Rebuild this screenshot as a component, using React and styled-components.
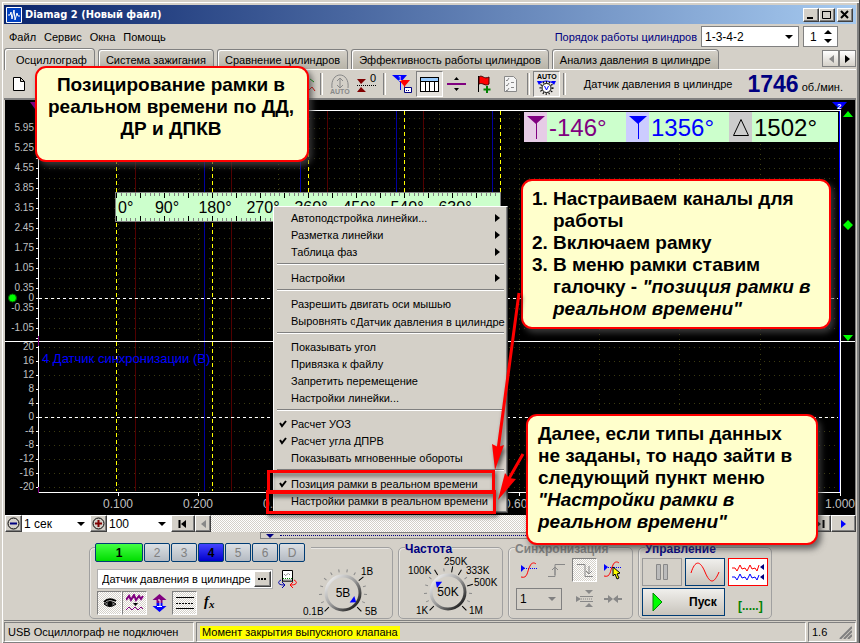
import { Fragment } from 'react'
import styled, { createGlobalStyle, css } from 'styled-components'

const sans = '"Liberation Sans", sans-serif'

const GlobalStyle = createGlobalStyle`
*{ box-sizing:border-box; }
body{
margin:0;
background:#d4d0c8;
color:#000;
font-family:${sans};
font-size:11px;
}
button, input, select{
font:inherit;
color:inherit;
margin:0;
padding:0;
}
`

const hatch = 'repeating-conic-gradient(#fff 0 25%, #d4d0c8 0 50%) 0 0 / 2px 2px'

const raised = css`
border:1px solid;
border-color:#fff #404040 #404040 #fff;
box-shadow:inset -1px -1px 0 #808080;
background:#d4d0c8;
`

const Page = styled.div`
position:relative;
`
const Window = styled.main`
display:flex;
flex-direction:column;
padding:5px 3px 1px 4px;
background:#d4d0c8;
border-right:1px solid #404040;
box-shadow:inset 2px 2px 0 #d4d0c8, inset 3px 3px 0 #fff, inset -2px -1px 0 #808080;
`
const TitleBar = styled.header`
display:flex;
align-items:center;
gap:3px;
height:19px;
padding:0 3px 0 2px;
background:linear-gradient(90deg, #0a246a, #a6caf0);
`
const Title = styled.h1`
flex:1;
margin:0;
color:#fff;
font-family:"DejaVu Sans Condensed", "DejaVu Sans", sans-serif;
font-size:11px;
font-weight:bold;
`
const WindowButtons = styled.div`
display:flex;
`
const WindowButton = styled.button`
${raised}
display:flex;
width:16px;
height:14px;
margin-left:${p => p.$apart ? '2px' : '0'};
`
const MenuRow = styled.div`
display:flex;
align-items:center;
justify-content:space-between;
height:25px;
padding:0 18px 0 5px;
`
const MenuBar = styled.nav`
display:flex;
gap:8px;
button{
border:0;
background:none;
}
`
const Order = styled.div`
display:flex;
align-items:center;
gap:4px;
color:#000080;
`
const SelectBox = styled.span`
display:grid;
align-items:center;
width:${p => p.$width};
height:${p => p.$height};
border:${p => p.$flat ? '0' : '1px solid #808080'};
background:${p => p.$off ? 'transparent' : '#fff'};
color:#000;
font-size:12px;
> *{ grid-area:1 / 1; }
select{
appearance:none;
width:100%;
height:100%;
padding-left:${p => p.$flat ? '2px' : '3px'};
border:0;
background:none;
}
svg{
justify-self:end;
margin-right:5px;
pointer-events:none;
}
`
const Spinner = styled.label`
display:flex;
align-items:center;
width:35px;
height:21px;
padding-left:6px;
border:1px solid #808080;
background:#fff;
color:#000;
font-size:12px;
input{
width:14px;
border:0;
background:none;
}
`
const TabRow = styled.div`
display:flex;
align-items:flex-end;
justify-content:space-between;
height:21px;
border-bottom:1px solid #fff;
`
const Tabs = styled.div`
display:flex;
align-items:flex-end;
gap:3px;
`
const Tab = styled.button`
height:${p => p.$active ? '22px' : '20px'};
margin-bottom:${p => p.$active ? '-1px' : '0'};
padding:${p => p.$active ? '0 7px 0 11px' : '0 7px'};
border:1px solid #808080;
border-bottom:0;
border-radius:3px 4px 0 0;
box-shadow:inset 1px 1px 0 #fff;
background:${p => p.$active ? '#d4d0c8' : 'linear-gradient(#d4d0c8, #b8b4a8)'};
white-space:nowrap;
`
const TabScroll = styled.div`
display:flex;
margin-bottom:2px;
button{
display:flex;
align-items:center;
justify-content:center;
width:17px;
height:17px;
border:1px solid #808080;
background:linear-gradient(#fff, #d4d0c8);
}
`
const Toolbar = styled.div`
display:flex;
align-items:center;
height:30px;
padding:0 13px 0 1px;
border-bottom:2px solid #808080;
white-space:nowrap;
`
const ToolSpacer = styled.div`
width:275px;
`
const Tool = styled.button`
display:flex;
align-items:center;
justify-content:center;
width:27px;
height:26px;
border:1px solid transparent;
background:none;
${p => p.$pressed && css`
border-color:#808080 #fff #fff #808080;
background:#e4e1dc;
`}
`
const Divider = styled.span`
width:3px;
height:22px;
margin:0 3px;
border-left:1px solid #808080;
border-right:1px solid #fff;
`
const ToolLabel = styled.span`
margin-left:auto;
`
const Rpm = styled.strong`
margin:0 3px 0 15px;
color:#000080;
font-size:23px;
line-height:24px;
`
const RpmUnit = styled.span`
padding-top:6px;
`
const Scope = styled.section`
position:relative;
margin:0 0 0 1px;
border-right:1px solid #808080;
background:#000;
> svg{
display:block;
width:100%;
}
`
const Readouts = styled.div`
position:absolute;
top:12px;
right:17px;
display:flex;
height:30px;
background:#ccffcc;
font-size:24px;
line-height:31px;
`
const ReadoutIcon = styled.span`
display:flex;
align-items:center;
justify-content:center;
width:23px;
background:${p => p.$bg};
`
const ReadoutValue = styled.span`
width:${p => p.$width};
padding-left:2px;
color:${p => p.$color};
`
const Ruler = styled.div`
position:absolute;
top:92px;
left:110px;
width:386px;
height:30px;
border:1px solid #808080;
background:#ccffcc;
svg{ display:block; }
`
const ControlRow = styled.div`
display:flex;
height:17px;
margin-left:1px;
background:#d4d0c8;
`
const SmallButton = styled.button`
${raised}
display:flex;
align-items:center;
justify-content:center;
width:${p => p.$width};
`
const Track = styled.div`
flex:1;
background:${hatch};
`
const Splitter = styled.div`
display:flex;
align-items:center;
gap:6px;
align-self:center;
width:340px;
height:7px;
padding:0 5px;
border:1px solid #808080;
i{
flex:1;
border-top:1px dotted #000080;
}
`
const Panel = styled.section`
display:flex;
gap:5px;
height:82px;
padding:8px 4px 1px 85px;
border-bottom:1px solid #808080;
`
const Group = styled.div`
display:flex;
flex-direction:column;
width:${p => p.$width};
height:72px;
border:1px solid #a0a0a0;
border-radius:5px;
box-shadow:inset 1px 1px 0 #e8e6e2;
`
const GroupTitle = styled.h2`
align-self:flex-start;
margin:-6px 0 0 6px;
background:#d4d0c8;
color:${p => p.$off ? '#808080' : '#000080'};
font-size:12px;
font-weight:bold;
line-height:15px;
`
const Channels = styled.div`
display:flex;
align-self:flex-start;
gap:1px;
margin:-5px 0 0 5px;
padding-right:6px;
background:#d4d0c8;
`
const Channel = styled.button`
width:${p => p.$wide ? '48px' : '26px'};
height:19px;
border:1px solid #003c74;
border-radius:2px;
background:linear-gradient(${p => p.$fill || '#dce0e4, #b4bac2'});
color:${p => p.$fill ? '#000' : '#808080'};
font-size:12px;
font-weight:${p => p.$fill ? 'bold' : 'normal'};
`
const ChannelBody = styled.div`
display:flex;
align-items:flex-start;
justify-content:space-between;
padding:0 5px 0 7px;
`
const Signal = styled.div`
display:flex;
flex-direction:column;
gap:2px;
padding-top:7px;
`
const Row = styled.div`
display:flex;
align-items:center;
gap:${p => p.$gap || '0'};
`
const SignalField = styled.label`
display:flex;
width:176px;
height:20px;
padding:1px;
border:1px solid #b0b0b0;
background:#fff;
input{
flex:1;
min-width:0;
padding-left:3px;
border:0;
background:none;
}
`
const Toggle = styled.button`
display:flex;
align-items:center;
justify-content:center;
width:25px;
height:24px;
border:1px solid transparent;
background:none;
${p => p.$pressed && css`
border-color:#808080 #fff #fff #808080;
background:${hatch};
`}
`
const KnobBox = styled.label`
display:grid;
margin-top:${p => p.$raise ? '-4px' : '0'};
> *{ grid-area:1 / 1; }
input{
opacity:0;
width:34px;
place-self:center;
}
`
const SyncGrid = styled.div`
display:grid;
grid-template-columns:repeat(4, 24px);
justify-content:space-between;
align-items:center;
gap:5px 4px;
padding:1px 8px 0 7px;
`
const Wide = styled.span`
grid-column:span 2;
`
const RunGrid = styled.div`
display:grid;
grid-template-columns:40px 40px 40px;
grid-template-rows:28px 28px;
gap:2px 3px;
padding:1px 3px;
`
const RunButton = styled.button`
display:flex;
align-items:center;
justify-content:${p => p.$span ? 'flex-start' : 'center'};
gap:26px;
padding-left:${p => p.$span ? '9px' : '0'};
grid-column:span ${p => p.$span || 1};
border:1px solid ${p => p.$edge || '#003c74'};
background:${p => p.$fill || 'linear-gradient(#f0efec, #c8c4bc)'};
font-size:12px;
font-weight:bold;
`
const Brackets = styled.output`
align-self:center;
padding:7px 0 0 10px;
color:#008000;
font-size:12px;
font-weight:bold;
white-space:nowrap;
`
const StatusBar = styled.footer`
display:flex;
gap:2px;
height:20px;
margin-top:1px;
`
const Status = styled.div`
display:flex;
align-items:center;
flex:${p => p.$flex || '0 0 auto'};
width:${p => p.$width || 'auto'};
padding:0 3px;
border:1px solid;
border-color:#808080 #fff #fff #808080;
mark{
padding:0 2px;
background:#ff0;
line-height:13px;
}
svg{ margin-left:auto; }
`
const Popup = styled.div`
position:absolute;
top:206px;
left:273px;
width:235px;
padding:2px 2px 3px;
${raised}
`
const PopupItem = styled.button`
display:grid;
grid-template-columns:15px 1fr 10px;
align-items:center;
width:100%;
height:17px;
border:0;
background:none;
text-align:left;
white-space:nowrap;
`
const PopupLine = styled.hr`
height:2px;
margin:3px 1px 4px;
border:0;
border-top:1px solid #808080;
border-bottom:1px solid #fff;
`
const Hint = styled.div`
position:absolute;
top:315px;
left:355px;
padding:0 1px;
background:#d4d0c8;
line-height:15px;
white-space:nowrap;
`
const Callout = styled.aside`
position:absolute;
top:${p => p.$top};
left:${p => p.$left};
width:${p => p.$width};
padding:${p => p.$pad};
border:2px solid #f00;
border-radius:11px;
background:#ffffcc;
box-shadow:3px 4px 6px rgba(70,70,70,.8);
font-size:19px;
font-weight:bold;
line-height:22px;
text-align:${p => p.$center ? 'center' : 'left'};
ol{
margin:0;
padding-left:19px;
}
`
const Marks = styled.svg`
position:absolute;
top:0;
left:0;
pointer-events:none;
filter:drop-shadow(2px 3px 2px rgba(0,0,0,.6));
`

const upperLabels = ['5.95', '5.25', '4.55', '3.85', '3.15', '2.45', '1.75', '1.05', '0.35']
const lowerLabels = [20, 16, 12, 8, 4, 0, -4, -8, -12, -16, -20]
const timeLabels = [[0, '0.100'], [1, '0.200'], [2, '0.300'], [5, '0.600'], [9, '1.000']]
const range = (n) => Array.from({ length: n }, (_, i) => i)
const timeX = (i) => 118 + Math.round(i * 80.2)

const Caret = ({ color = '#000' }) => (
    <svg width="8" height="4"><path d="M0 0h8L4 4z" fill={color} /></svg>
)

const Arrow = ({ left, bar, color = '#000' }) => (
    <svg width="12" height="10">
        <path d={left ? 'M9 1v8L4 5z' : 'M3 1v8l5-4z'} fill={color} />
        {bar && <path d={left ? 'M2.5 1v8' : 'M10.5 1v8'} stroke={color} strokeWidth="2" />}
    </svg>
)

const Select = ({ label, value, width, height, flat, off }) => (
    <SelectBox $width={width} $height={height} $flat={flat} $off={off}>
        <select aria-label={label} defaultValue={value}><option>{value}</option></select>
        <Caret color={off ? '#808080' : '#000'} />
    </SelectBox>
)

const Chart = () => (
    <svg viewBox="5 100 850 415" role="img" aria-label="Осциллограмма" shapeRendering="crispEdges">
        <g stroke="#3a3a10" strokeDasharray="1 4">
            {range(22).map(i => <path key={i} d={`M44 ${118.5 + i * 10}H838`} />)}
            {range(11).map(i => <path key={i} d={`M44 ${347.5 + i * 14}H838`} />)}
            {range(9).map(i => <path key={i} d={`M${timeX(i) + 0.5} 114V490`} />)}
        </g>
        {range(4).map(i => (
            <g key={i}>
                <path d={`M${135.5 + i * 96} 111V491`} stroke="#500000" />
                <path d={`M${204.5 + i * 96} 111V491`} stroke="#0000a0" />
            </g>
        ))}
        {range(5).map(i => <path key={i} d={`M${116.5 + i * 96} 111V491`} stroke="#ff0" strokeDasharray="4 3" />)}
        <g stroke="#fff" fill="none">
            <path d="M38.5 110V492M38 110.5H840M5 341.5H855M38 492.5H840M840.5 110V495" />
            <path d="M39 298.5H838M39 417.5H838" strokeDasharray="3 3" />
            {range(22).map(i => <path key={i} d={`M36 ${128.5 + i * 10}h2`} />)}
            {range(11).map(i => <path key={i} d={`M36 ${347.5 + i * 14}h2`} />)}
            {range(10).map(i => <path key={i} d={`M${timeX(i) + 0.5} 492v4`} />)}
        </g>
        <path d="M839.5 111V492" stroke="#00f" />
        <path d="M38.5 336v10M38.5 487v6" stroke="#800080" />
        <g fill="#c0c0c0" fontSize="10" textAnchor="end">
            {upperLabels.map((t, i) => <text key={t} x="34" y={131 + i * 20}>{t}</text>)}
            <text x="34" y="301">0</text>
            <text x="34" y="311">-0.35</text>
            <text x="34" y="331">-1.05</text>
            {lowerLabels.map((t, i) => <text key={t} x="34" y={350 + i * 14}>{t}</text>)}
        </g>
        <g fill="#c0c0c0" fontSize="12" textAnchor="middle">
            {timeLabels.map(([i, t]) => <text key={t} x={timeX(i)} y="508">{t}</text>)}
        </g>
        <text x="42" y="363" fill="#0000ff" fontSize="13">4 Датчик синхронизации (В)</text>
        <g shapeRendering="auto">
            <circle cx="12.5" cy="298" r="4" fill="#0f0" stroke="#060" />
            <path d="M30 102h9l-4 7z" fill="#800080" />
            <path d="M832 102h15l-7 8z" fill="#00f" />
            <text x="837" y="109" fill="#fff" fontSize="8" fontWeight="bold">2</text>
            <path d="M843 117h10l-5-6zM848 220l5 5-5 5-5-5zM843 335h10l-5 6z" fill="#0f0" />
        </g>
    </svg>
)

const RulerScale = () => (
    <svg width="384" height="28" shapeRendering="crispEdges" aria-label="Линейка">
        {range(81).map(i => {
            const x = Math.round(i * 4.8) + 0.5
            const h = i % 5 ? 3 : 5
            return <path key={i} d={`M${x} 0v${h}M${x} 28v-${h}`} stroke={i % 5 ? '#808080' : '#000'} />
        })}
        <g fontSize="16">
            <text x="2" y="20">0°</text>
            {range(7).map(i => <text key={i} x={51 + i * 48} y="20" textAnchor="middle">{(i + 1) * 90}°</text>)}
        </g>
    </svg>
)

const Funnel = ({ color }) => (
    <svg width="18" height="24">
        <path d="M0 1h18L9 9z" fill={color} />
        <path d="M9.500 5v19" stroke={color} />
    </svg>
)

const Knob = ({ id, name, value, width, cx, pointer, marks, labels, raise }) => (
    <KnobBox $raise={raise}>
        <svg width={width} height="60" fontSize="10">
            <defs>
                <linearGradient id={id} x1="0" y1="0" x2="1" y2="1">
                    <stop offset="0" stopColor="#fff" />
                    <stop offset=".5" stopColor="#999" />
                    <stop offset="1" stopColor="#000" />
                </linearGradient>
            </defs>
            {range(14).map(i => (
                <path
                    key={i}
                    d={`M${cx} ${marks.includes(i) ? 9 : 11}V${marks.includes(i) ? 15 : 14}`}
                    stroke={marks.includes(i) ? '#000' : '#888'}
                    transform={`rotate(${-135 + i * 270 / 13} ${cx} 35)`}
                />
            ))}
            <circle cx={cx} cy="35" r="17" fill="#d4d0c8" stroke={`url(#${id})`} strokeWidth="3" />
            <path d="M-4 0h8L0-5z" fill="#00f" transform={`rotate(${pointer} ${cx} 35) translate(${cx} 24)`} />
            <text x={cx} y="39" fontSize="12" textAnchor="middle">{value}</text>
            {labels.map(([t, x, y]) => <text key={t} x={x} y={y}>{t}</text>)}
        </svg>
        <input type="range" aria-label={name} />
    </KnobBox>
)

const popup = [
    [['Автоподстройка линейки...', 'sub'], ['Разметка линейки', 'sub'], ['Таблица фаз', 'sub']],
    [['Настройки', 'sub']],
    [['Разрешить двигать оси мышью'], ['Выровнять оси']],
    [['Показывать угол'], ['Привязка к файлу'], ['Запретить перемещение'], ['Настройки линейки...']],
    [['Расчет УОЗ', 'on'], ['Расчет угла ДПРВ', 'on'], ['Показывать мгновенные обороты']],
    [['Позиция рамки в реальном времени', 'on'], ['Настройки рамки в реальном времени']],
]

const ContextMenu = () => (
    <Popup role="menu">
        {popup.map((items, n) => (
            <Fragment key={n}>
                {n > 0 && <PopupLine />}
                {items.map(([text, kind]) => (
                    <PopupItem key={text} role="menuitem">
                        <svg width="12" height="10">
                            {kind === 'on' && <path d="M4 4l2 3 4-5" fill="none" stroke="#000" strokeWidth="2" />}
                        </svg>
                        <span>{text}</span>
                        {kind === 'sub' && <svg width="5" height="8"><path d="M0 0v8l5-4z" /></svg>}
                    </PopupItem>
                ))}
            </Fragment>
        ))}
    </Popup>
)

const Tools = () => (
    <Toolbar>
        <Tool aria-label="Новый">
            <svg width="14" height="16"><path d="M1.500 1.500h7l4 4v9h-11zM8.500 1.500v4h4" fill="#fff" stroke="#000" /></svg>
        </Tool>
        <ToolSpacer />
        <svg width="10" height="24">
            <path d="M3 7l4 3" stroke="#080" />
            <path d="M2 18l3-3 3 4" fill="none" stroke="#c00" />
        </svg>
        <Divider />
        <Tool aria-label="Автомасштаб">
            <svg width="20" height="22" fill="none" stroke="#888">
                <path d="M2 15C1 7 5 2 10 2s9 5 8 13M10 5v10M7 8l3-3 3 3M7 12l3 3 3-3" />
                <text x="0" y="21" fontSize="7" fontWeight="bold" fill="#888" stroke="none">AUTO</text>
            </svg>
        </Tool>
        <Tool aria-label="Ноль">
            <svg width="22" height="22">
                <path d="M1 6h9l-5 5zM1 19h9l-5-5z" fill="#800000" />
                <path d="M1 12.500h20" stroke="#000" strokeDasharray="1 1" />
                <text x="14" y="9" fontSize="11">0</text>
            </svg>
        </Tool>
        <Divider />
        <Tool aria-label="Фильтр">
            <svg width="22" height="22">
                <path d="M0 2h15L9 9v8H8V9z" fill="#00f" />
                <path d="M7 7h11l-5 6v5h-1v-5z" fill="#f00" />
                <path d="M12.500 14.500h7v5h-7z" fill="#fff" stroke="#000080" />
                <path d="M14 17.500h4" stroke="#000080" strokeDasharray="1 1" />
                <text x="6" y="8" fontSize="7" fill="#fff">1</text>
            </svg>
        </Tool>
        <Tool aria-label="Таблица" $pressed>
            <svg width="19" height="17" shapeRendering="crispEdges">
                <path d="M.5 1.500h18v14H.5z" fill="#fff" />
                <path d="M1 2h17v3H1z" fill="#9cf" />
                <path d="M.5 1.500h18v14H.5zM0 5.500h19M5.500 5v11M9.500 5v11M14.500 5v11" fill="none" stroke="#000" />
            </svg>
        </Tool>
        <Tool aria-label="Разделить">
            <svg width="19" height="16"><path d="M7 4h5L9.500 1zM7 12h5l-2.500 3z" /><path d="M0 8h19" stroke="#800080" strokeWidth="2" /></svg>
        </Tool>
        <Tool aria-label="Флаг">
            <svg width="16" height="20">
                <path d="M2.500 2v16" stroke="#000" />
                <path d="M3 3c3-3 5 3 10 0v7c-4 3-6-2-10 0z" fill="#f00" stroke="#400" />
                <path d="M11 12v7M7.500 15.500h7" stroke="#008000" strokeWidth="2" />
            </svg>
        </Tool>
        <Tool aria-label="Список">
            <svg width="15" height="18" fill="none" stroke="#888">
                <path d="M1.500 1.500h9l3 3v12h-12z" fill="#f4f4f4" />
                <path d="M3 5l1 1 2-3M3 10l1 1 2-3M3 15l1 1 2-3M8 7.500h3M8 12.500h3" />
            </svg>
        </Tool>
        <Divider />
        <Tool aria-label="Авто" $pressed>
            <svg width="23" height="24">
                <text x="2" y="7" fontSize="7" fontWeight="bold">AUTO</text>
                <path d="M5 11q6-4 13 0" fill="none" stroke="#00f" />
                <path d="M2 9h5l-3 4zM21 9h-5l3 4z" fill="#00f" />
                <circle cx="11.500" cy="16" r="6" fill="none" stroke="#000" strokeWidth="2" strokeDasharray="1 2" />
                <circle cx="11.500" cy="16" r="4.500" fill="#fff" stroke="#000" />
                <path d="M9.500 14l2 4 2-4" fill="none" stroke="#00f" />
            </svg>
        </Tool>
        <Divider />
        <ToolLabel>Датчик давления в цилиндре</ToolLabel>
        <Rpm>1746</Rpm>
        <RpmUnit>об./мин.</RpmUnit>
    </Toolbar>
)

const ChannelGroup = () => (
    <Group $width="304px">
        <Channels>
            <Channel $wide $fill="#4f4, #0d0">1</Channel>
            <Channel>2</Channel>
            <Channel>3</Channel>
            <Channel $fill="#44f, #00c">4</Channel>
            <Channel>5</Channel>
            <Channel>6</Channel>
            <Channel>D</Channel>
        </Channels>
        <ChannelBody>
            <Signal>
                <Row $gap="5px">
                    <SignalField>
                        <input aria-label="Сигнал" defaultValue="Датчик давления в цилиндре" />
                        <SmallButton $width="17px" aria-label="Выбрать">
                            <svg width="9" height="2"><path d="M0 1h9" stroke="#000" strokeWidth="2" strokeDasharray="2 1" /></svg>
                        </SmallButton>
                    </SignalField>
                    <svg width="19" height="20" fill="none">
                        <path d="M4.500 1.500h10v11h-10z" fill="#fff" stroke="#000" />
                        <path d="M5 9.500h9" stroke="#080" strokeDasharray="1 1" />
                        <path d="M5 11.500h9" stroke="#888" strokeWidth="2" />
                        <path d="M6 5l2 2 2-3 2 2" stroke="#555" strokeDasharray="1 1" />
                        <path d="M3 11c-4 2-3 5 3 5M4 13l3 3-3 3" stroke="#00a" />
                        <path d="M16 11c4 2 3 5-3 5M15 13l-3 3 3 3" stroke="#f00" />
                    </svg>
                </Row>
                <Row>
                    <Toggle $pressed aria-label="Показать">
                        <svg width="14" height="12">
                            <path d="M1 5q5-5 12-1" stroke="#000" strokeWidth="2" fill="none" />
                            <path d="M1 7q6-5 12 0-6 5-12 0z" fill="#777" stroke="#000" />
                            <circle cx="7" cy="7" r="2.500" />
                        </svg>
                    </Toggle>
                    <Toggle $pressed aria-label="Сигналы">
                        <svg width="18" height="18" fill="none" stroke="#800080">
                            <path d="M0 6l3-4 2 4 3-5 2 5 3-4 2 3 2-3" strokeWidth="2" />
                            <path d="M0 16l3-3 3 3 3-3 3 3 3-3 2 2" />
                            <path d="M7 9h5l-2.500 3z" fill="#000" stroke="none" />
                        </svg>
                    </Toggle>
                    <Toggle aria-label="Сдвиг">
                        <svg width="15" height="18">
                            <path d="M7.500 0l7 6h-4v3h-6V6h-4z" fill="#800080" />
                            <path d="M7.500 18l7-6h-4V9h-6v3h-4z" fill="#00f" />
                            <path d="M6 6h2v6M5 12.500h5" stroke="#fff" fill="none" />
                        </svg>
                    </Toggle>
                    <Toggle $pressed aria-label="Линии">
                        <svg width="18" height="14" stroke="#000">
                            <path d="M0 1.500h18M0 12.500h18" />
                            <path d="M0 7.500h18" strokeDasharray="2 1" />
                        </svg>
                    </Toggle>
                    <Toggle aria-label="Функция">
                        <svg width="14" height="16" fontWeight="bold" fontStyle="italic" fontFamily="Liberation Serif, serif">
                            <text x="1" y="11" fontSize="14">f</text>
                            <text x="6" y="13" fontSize="11">x</text>
                        </svg>
                    </Toggle>
                </Row>
            </Signal>
            <Knob
                id="volts" name="Напряжение" value="5В" width={84} cx={40} pointer={125} marks={[0, 9, 13]} raise
                labels={[['1В', 58, 17], ['0.1В', 0, 57], ['5В', 62, 57]]}
            />
        </ChannelBody>
    </Group>
)

const SyncGroup = () => (
    <Group $width="125px">
        <GroupTitle $off>Синхронизация</GroupTitle>
        <SyncGrid>
            <Toggle aria-label="Уровень">
                <svg width="18" height="18" fill="none">
                    <path d="M1 4v7l4-4z" fill="#00f" />
                    <path d="M4 7.500h13" stroke="#00f" strokeDasharray="1 1" />
                    <path d="M1 16c7 2 6-6 9-11 1-3 4-4 6-2" stroke="#f00" />
                </svg>
            </Toggle>
            <Toggle aria-label="Фронт">
                <svg width="18" height="16" fill="none" stroke="#888"><path d="M0 14.500h7V2.500h10M7 6v7M4 8l3-3 3 3" /></svg>
            </Toggle>
            <Toggle $pressed aria-label="Спад">
                <svg width="18" height="16" fill="none" stroke="#888"><path d="M1 2.500h8v12h8M13 4v8M10 9l3 3 3-3" /></svg>
            </Toggle>
            <Toggle aria-label="Указать">
                <svg width="20" height="20" fill="none">
                    <path d="M1 4v7l4-4z" fill="#00f" />
                    <path d="M5 7.500h13" stroke="#00f" strokeDasharray="1 1" />
                    <path d="M1 16c7 2 6-6 9-11 1-3 4-4 6-2" stroke="#f00" />
                    <path d="M10 7l7 6-3 1 2 4-2 1-2-5-2 2z" fill="#ff0" stroke="#000" />
                </svg>
            </Toggle>
            <Wide><Select label="Канал" value="1" width="46px" height="22px" off /></Wide>
            <Toggle aria-label="Ширина">
                <svg width="18" height="18" fill="#888">
                    <path d="M0 6l5 3-5 3zM9 0h8l-4 4zM9 17h8l-4-4z" />
                    <path d="M4 6.500h13M4 11.500h13" stroke="#888" /><path d="M5 9h12" stroke="#888" strokeDasharray="1 1" />
                </svg>
            </Toggle>
            <Toggle aria-label="Сжать">
                <svg width="18" height="10" fill="#888"><path d="M0 4h4V1l5 4-5 4V6H0zM18 4h-4V1L9 5l5 4V6h4z" /></svg>
            </Toggle>
        </SyncGrid>
    </Group>
)

const RunGroup = () => (
    <Group $width="134px">
        <GroupTitle>Управление</GroupTitle>
        <RunGrid>
            <RunButton $edge="#999" $fill="#d4d0c8" aria-label="Пауза">
                <svg width="12" height="16" fill="#bbb" stroke="#888"><path d="M.5.5h4v15h-4zM7.500.5h4v15h-4z" /></svg>
            </RunButton>
            <RunButton aria-label="Синус">
                <svg width="30" height="20" fill="none" stroke="#f00"><path d="M1 11C5-2 10-2 15 10s9 12 14 0" /></svg>
            </RunButton>
            <RunButton $edge="#f00" $fill="#fff" aria-label="Потоки">
                <svg width="34" height="20" fill="none">
                    <path d="M1 6h3l2 3 3-6 2 4 3-1 2 3 3-6 2 4 3-1 2 3 2-6" stroke="#f00" />
                    <path d="M1 15h3l2 3 3-6 2 4 3-1 2 3 3-6 2 4 3-1 2 3 2-5" stroke="#00f" />
                    <path d="M33 2v6l-4-3zM33 12v6l-4-3z" fill="#000080" />
                </svg>
            </RunButton>
            <RunButton $span={2}>
                <svg width="11" height="20"><path d="M1 1v18l9-9z" fill="#0f0" stroke="#080" /></svg>
                Пуск
            </RunButton>
            <Brackets>[.....]</Brackets>
        </RunGrid>
    </Group>
)

const App = () => {
    return (
        <Page>
            <GlobalStyle />
            <Window>
                <TitleBar>
                    <svg width="16" height="16" fill="none">
                        <path d="M.5.5h15v15H.5z" fill="#0040c0" stroke="#fff" />
                        <path d="M2 8h2l1-3 1 7 2-9 1 10 2-7 1 3h2" stroke="#fff" />
                    </svg>
                    <Title>Diamag 2 (Новый файл)</Title>
                    <WindowButtons>
                        <WindowButton aria-label="Свернуть"><svg width="13" height="11"><path d="M3 9h6" stroke="#000" strokeWidth="2" /></svg></WindowButton>
                        <WindowButton aria-label="Развернуть"><svg width="13" height="11"><path d="M2.500 2.500h8v7h-8zM2 2.500h9" fill="none" stroke="#000" /></svg></WindowButton>
                        <WindowButton $apart aria-label="Закрыть"><svg width="13" height="11"><path d="M3 2l7 7M10 2l-7 7" stroke="#000" strokeWidth="2" /></svg></WindowButton>
                    </WindowButtons>
                </TitleBar>
                <MenuRow>
                    <MenuBar>
                        <button>Файл</button>
                        <button>Сервис</button>
                        <button>Окна</button>
                        <button>Помощь</button>
                    </MenuBar>
                    <Order>
                        Порядок работы цилиндров
                        <Select label="Порядок работы цилиндров" value="1-3-4-2" width="98px" height="21px" />
                        <Spinner>
                            <input aria-label="Цилиндр" defaultValue="1" />
                            <svg width="8" height="14"><path d="M0 4h8L4 0zM0 9h8l-4 4z" /></svg>
                        </Spinner>
                    </Order>
                </MenuRow>
                <TabRow>
                    <Tabs role="tablist">
                        <Tab role="tab" $active>Осциллограф</Tab>
                        <Tab role="tab">Система зажигания</Tab>
                        <Tab role="tab">Сравнение цилиндров</Tab>
                        <Tab role="tab">Эффективность работы цилиндров</Tab>
                        <Tab role="tab">Анализ давления в цилиндре</Tab>
                    </Tabs>
                    <TabScroll>
                        <button aria-label="Назад"><Arrow left color="#888" /></button>
                        <button aria-label="Вперед"><Arrow /></button>
                    </TabScroll>
                </TabRow>
                <Tools />
                <Scope>
                    <Chart />
                    <Readouts>
                        <ReadoutIcon $bg="#e6cce6"><Funnel color="#800080" /></ReadoutIcon>
                        <ReadoutValue $color="#800080" $width="79px">-146°</ReadoutValue>
                        <ReadoutIcon $bg="#ccccff"><Funnel color="#0000ff" /></ReadoutIcon>
                        <ReadoutValue $color="#0000ff" $width="80px">1356°</ReadoutValue>
                        <ReadoutIcon $bg="#cccccc">
                            <svg width="18" height="19"><path d="M9 1.500l7.500 16h-15z" fill="none" stroke="#000" /></svg>
                        </ReadoutIcon>
                        <ReadoutValue $color="#000000" $width="86px">1502°</ReadoutValue>
                    </Readouts>
                    <Ruler><RulerScale /></Ruler>
                </Scope>
                <ControlRow>
                    <SmallButton $width="17px" aria-label="Уменьшить">
                        <svg width="13" height="13"><circle cx="6.500" cy="6.500" r="5.500" fill="none" stroke="#000" /><path d="M3 6.500h7" stroke="#000080" strokeWidth="2" /></svg>
                    </SmallButton>
                    <Select label="Время" value="1 сек" width="68px" height="17px" flat />
                    <SmallButton $width="17px" aria-label="Увеличить">
                        <svg width="13" height="13"><circle cx="6.500" cy="6.500" r="5.500" fill="none" stroke="#000" /><path d="M3 6.500h7M6.500 3v7" stroke="#800000" strokeWidth="2" /></svg>
                    </SmallButton>
                    <Select label="Масштаб" value="100" width="64px" height="17px" flat />
                    <SmallButton $width="24px" aria-label="В начало"><Arrow left bar /></SmallButton>
                    <SmallButton $width="16px" aria-label="Назад"><Arrow left color="#888" /></SmallButton>
                    <Track />
                    <SmallButton $width="16px" aria-label="Вперед"><Arrow color="#888" /></SmallButton>
                    <SmallButton $width="24px" aria-label="В конец"><Arrow bar /></SmallButton>
                    <SmallButton $width="25px" aria-label="Пуск"><Arrow color="#00f" /></SmallButton>
                </ControlRow>
                <Splitter><Caret color="#000080" /><i /></Splitter>
                <Panel>
                    <ChannelGroup />
                    <Group $width="105px">
                        <GroupTitle>Частота</GroupTitle>
                        <Knob
                            id="rate" name="Частота" value="50K" width={103} cx={49} pointer={-50} marks={[0, 5, 7, 8, 10, 13]}
                            labels={[['100K', 9, 17], ['250K', 45, 8], ['333K', 67, 17], ['500K', 75, 29], ['1K', 17, 57], ['1M', 70, 57]]}
                        />
                    </Group>
                    <SyncGroup />
                    <RunGroup />
                </Panel>
                <StatusBar>
                    <Status $width="190px">USB Осциллограф не подключен</Status>
                    <Status $flex="1"><mark>Момент закрытия выпускного клапана</mark></Status>
                    <Status $width="48px">
                        1.6
                        <svg width="13" height="13" stroke="#808080"><path d="M1 13L13 1M5 13l8-8M9 13l4-4" strokeWidth="2" /></svg>
                    </Status>
                </StatusBar>
            </Window>
            <ContextMenu />
            <Hint role="tooltip">Датчик давления в цилиндре</Hint>
            <Callout $top="66px" $left="35px" $width="274px" $pad="6px 6px 20px 4px" $center>
                Позицирование рамки в реальном времени по ДД, ДР и ДПКВ
            </Callout>
            <Callout $top="179px" $left="521px" $width="310px" $pad="7px 8px 7px 11px">
                <ol>
                    <li>Настраиваем каналы для работы</li>
                    <li>Включаем рамку</li>
                    <li>В меню рамки ставим галочку - <i>"позиция рамки в реальном времени"</i></li>
                </ol>
            </Callout>
            <Callout $top="414px" $left="526px" $width="292px" $pad="7px 8px 10px 10px">
                Далее, если типы данных не заданы, то надо зайти в следующий пункт меню <i>"Настройки рамки в реальном времени"</i>
            </Callout>
            <Marks width="540" height="530" fill="none" stroke="#f00">
                <path d="M268.500 471.500h225v21h-225zM267.500 491.500h227v21h-227z" strokeWidth="3" />
                <path d="M519 293L498 450M523 454L507 482" strokeWidth="3" />
                <path d="M495 470l-3-26 6 3 6-2zM498 500l7-27 4 5 7 1z" fill="#f00" stroke="none" />
            </Marks>
        </Page>
    )
}

export default App
